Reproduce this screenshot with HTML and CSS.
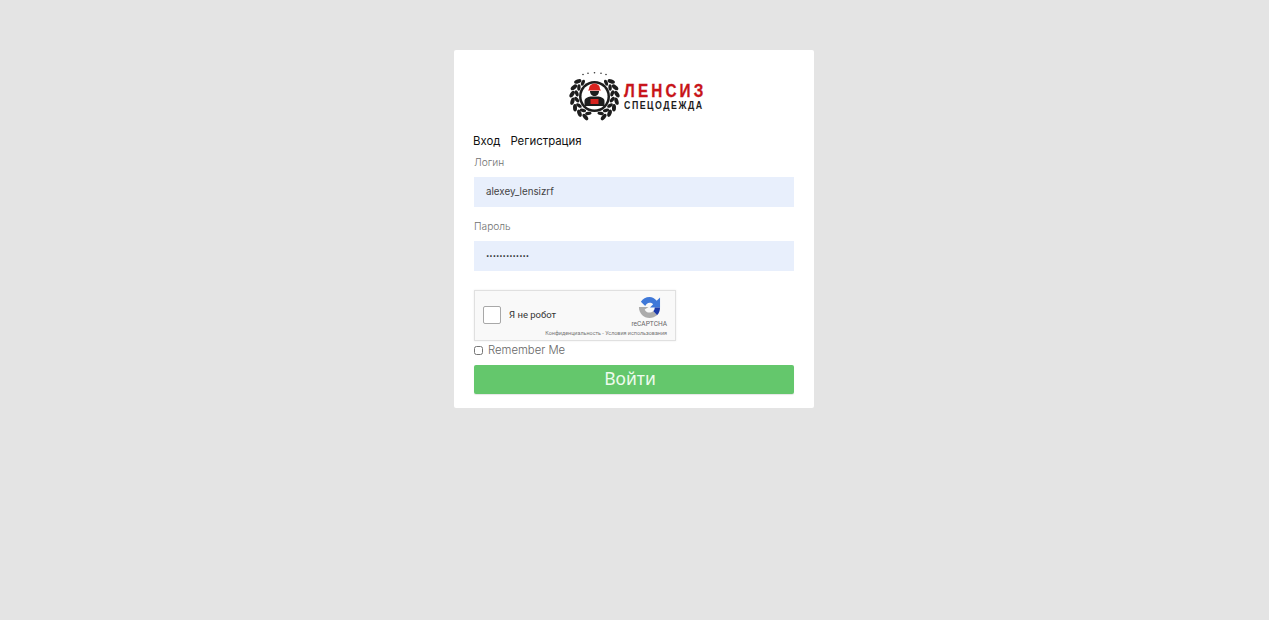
FILE: index.html
```html
<!DOCTYPE html>
<html lang="ru">
<head>
    <meta charset="UTF-8">
    <meta name="viewport" content="width=device-width, initial-scale=1.0">
    <title>Вход</title>
    <link rel="stylesheet" href="styles.css">
</head>
<body>
    <div class="login-card">
        <div class="logo">
            <svg class="logo-mark" width="53" height="51" viewBox="0 0 53 51">
                <defs>
                    <g id="wreath-half" fill="#1d1d1d">
                        <ellipse cx="26.5" cy="2" rx="3.800" ry="2" transform="rotate(48 26.500 24.500) rotate(-28 26.500 2)"/>
                        <ellipse cx="26.5" cy="2" rx="3.800" ry="2" transform="rotate(66 26.500 24.500) rotate(-28 26.500 2)"/>
                        <ellipse cx="26.5" cy="2" rx="3.800" ry="2" transform="rotate(84 26.500 24.500) rotate(-28 26.500 2)"/>
                        <ellipse cx="26.5" cy="2" rx="3.800" ry="2" transform="rotate(102 26.500 24.500) rotate(-28 26.500 2)"/>
                        <ellipse cx="26.5" cy="2" rx="3.800" ry="2" transform="rotate(120 26.500 24.500) rotate(-28 26.500 2)"/>
                        <ellipse cx="26.5" cy="2" rx="3.800" ry="2" transform="rotate(138 26.500 24.500) rotate(-28 26.500 2)"/>
                        <ellipse cx="26.5" cy="2" rx="3.800" ry="2" transform="rotate(156 26.500 24.500) rotate(-28 26.500 2)"/>
                        <ellipse cx="26.5" cy="6.500" rx="3.200" ry="1.700" transform="rotate(40 26.500 24.500) rotate(28 26.500 6.500)"/>
                        <ellipse cx="26.5" cy="6.500" rx="3.200" ry="1.700" transform="rotate(60 26.500 24.500) rotate(28 26.500 6.500)"/>
                        <ellipse cx="26.5" cy="6.500" rx="3.200" ry="1.700" transform="rotate(80 26.500 24.500) rotate(28 26.500 6.500)"/>
                        <ellipse cx="26.5" cy="6.500" rx="3.200" ry="1.700" transform="rotate(100 26.500 24.500) rotate(28 26.500 6.500)"/>
                        <ellipse cx="26.5" cy="6.500" rx="3.200" ry="1.700" transform="rotate(120 26.500 24.500) rotate(28 26.500 6.500)"/>
                        <ellipse cx="26.5" cy="6.500" rx="3.200" ry="1.700" transform="rotate(140 26.500 24.500) rotate(28 26.500 6.500)"/>
                        <ellipse cx="26.5" cy="6.500" rx="3.200" ry="1.700" transform="rotate(160 26.500 24.500) rotate(28 26.500 6.500)"/>
                    </g>
                </defs>
                <use href="#wreath-half"/>
                <use href="#wreath-half" transform="translate(53 0) scale(-1 1)"/>
                <g fill="#333">
                    <circle cx="15" cy="2.500" r="0.800"/><circle cx="20" cy="1.200" r="0.800"/><circle cx="26.500" cy="0.800" r="0.800"/><circle cx="33" cy="1.200" r="0.800"/><circle cx="38" cy="2.500" r="0.800"/>
                </g>
                <circle cx="26.500" cy="24.500" r="15.500" fill="#1d1d1d"/>
                <circle cx="26.500" cy="24.500" r="13" fill="#fff"/>
                <path d="M21 17a5.500 5.500 0 0 1 11 0l1 1.500H20z" fill="#d8231f"/>
                <path d="M22 19h9c0 3-2 5-4.500 5s-4.500-2-4.500-5z" fill="#1d1d1d"/>
                <path d="M16.500 34v-5c0-2.500 3-4 6-4.500h8c3 .5 6 2 6 4.500v5z" fill="#1d1d1d"/>
                <rect x="22.500" y="27" width="8" height="5" fill="#d8231f"/>
            </svg>
            <div class="logo-text">
                <span class="logo-top">ЛЕНСИЗ</span>
                <span class="logo-bottom">СПЕЦОДЕЖДА</span>
            </div>
        </div>

        <div class="tabs">
            <span>Вход</span>
            <span>Регистрация</span>
        </div>

        <form class="login-form">
            <label class="field-label">Логин</label>
            <div class="field-input">alexey_lensizrf</div>

            <label class="field-label second">Пароль</label>
            <div class="field-input dots">•••••••••••••</div>

            <div class="captcha">
                <div class="captcha-box"></div>
                <span class="captcha-text">Я не робот</span>
                <div class="captcha-brand">
                    <svg width="23" height="23" viewBox="0 0 24 24">
                        <path d="M12 1C8.200 1 5 3 3 6l4.500 4.500C8.500 8.500 10 7 12 7c1.400 0 2.800.5 3.800 1.500L12.500 12H23V1.500l-3.500 3.500C17.500 2.500 15 1 12 1z" fill="#3f78d8"/>
                        <path d="M23 12h-5.500c0 1.600-.7 3-1.700 4l4 4.200C22 18 23 15 23 12z" fill="#1c3aa9"/>
                        <path d="M1 12c0 6 5 11 11 11 3 0 5.800-1.100 7.800-2.800l-4-4.200c-1 .8-2.400 1.300-3.800 1.300-2.500 0-4.300-1.400-5-3.300L11 11.500H1z" fill="#acacac"/>
                    </svg>
                    <span class="captcha-name">reCAPTCHA</span>
                </div>
                <span class="captcha-links">Конфиденциальность - Условия использования</span>
            </div>

            <label class="remember">
                <input type="checkbox">
                <span>Remember Me</span>
            </label>

            <button type="button" class="submit-btn">Войти</button>
        </form>
    </div>
</body>
</html>
```

FILE: styles.css
```css
body {
    margin: 0;
    padding: 50px 0 0 454px;
    height: 620px;
    box-sizing: border-box;
    overflow: hidden;
    background: #e4e4e4;
    font-family: Inter, "Noto Sans", sans-serif;
}
.login-card {
    width: 360px;
    height: 358px;
    box-sizing: border-box;
    padding: 20px 20px 0;
    background: #fff;
    border-radius: 2px;
}
.logo {
    display: flex;
    align-items: center;
    gap: 3px;
    height: 54px;
    margin-left: 94px;
}
.logo-text {
    display: flex;
    flex-direction: column;
    gap: 2px;
    width: 78px;
    font-family: "Liberation Sans", sans-serif;
    font-weight: bold;
    white-space: nowrap;
}
.logo-top, .logo-bottom {
    transform-origin: left center;
}
.logo-top {
    font-size: 18px;
    line-height: 15px;
    letter-spacing: 3.700px;
    color: #c8141a;
    -webkit-text-stroke: 0.3px #c8141a;
    transform: scaleX(0.85);
}
.logo-bottom {
    font-size: 11px;
    line-height: 9px;
    letter-spacing: 1.900px;
    color: #1d1d1d;
    transform: scaleX(0.8);
}
.tabs {
    display: flex;
    gap: 10px;
    margin: 8px 0 0 -1px;
    font-size: 11.400px;
    line-height: 18px;
    color: #111;
}
.login-form {
    display: flex;
    flex-direction: column;
}
.field-label {
    margin-top: 4px;
    height: 23px;
    font-size: 10.200px;
    font-weight: 300;
    line-height: 16px;
    color: #707070;
}
.field-label.second {
    margin-top: 11px;
}
.field-input {
    height: 30px;
    padding-left: 12px;
    background: #e8effc;
    font-size: 9.800px;
    line-height: 29px;
    color: #444;
}
.field-input.dots {
    font-size: 5.900px;
    color: #222;
}
.captcha {
    position: relative;
    width: 202px;
    height: 51px;
    margin-top: 19px;
    box-sizing: border-box;
    background: #f9f9f9;
    border: 1px solid #e0e0e0;
    box-shadow: 0 0 2px rgba(0, 0, 0, 0.08);
    font-family: Roboto, sans-serif;
}
.captcha-box {
    position: absolute;
    left: 8px;
    top: 15px;
    width: 16px;
    height: 16px;
    background: #fff;
    border: 1px solid #a8a8a8;
    border-radius: 2px;
}
.captcha-text {
    position: absolute;
    left: 34px;
    top: 18px;
    font-size: 9.500px;
    line-height: 12px;
    color: #333;
}
.captcha-brand {
    position: absolute;
    right: 8px;
    top: 5px;
    display: flex;
    flex-direction: column;
    align-items: center;
}
.captcha-name {
    font-size: 6.600px;
    line-height: 8px;
    margin-top: 1px;
    color: #666;
}
.captcha-links {
    position: absolute;
    right: 8px;
    top: 39px;
    font-size: 5.400px;
    line-height: 6px;
    color: #777;
    white-space: nowrap;
}
.remember {
    display: flex;
    align-items: center;
    gap: 5px;
    height: 18px;
    font-size: 11.300px;
    font-weight: 300;
    color: #666;
}
.remember input {
    width: 9px;
    height: 9px;
    margin: 0;
}
.submit-btn {
    height: 29px;
    margin-top: 6px;
    padding: 0 8px 3px 0;
    border: 0;
    border-radius: 2px;
    background: #64c76c;
    color: #eefbee;
    font-family: "Noto Sans", sans-serif;
    font-size: 17.500px;
    font-weight: 400;
    line-height: 26px;
    box-shadow: 0 1px 1px rgba(0, 0, 0, 0.1);
}
```
